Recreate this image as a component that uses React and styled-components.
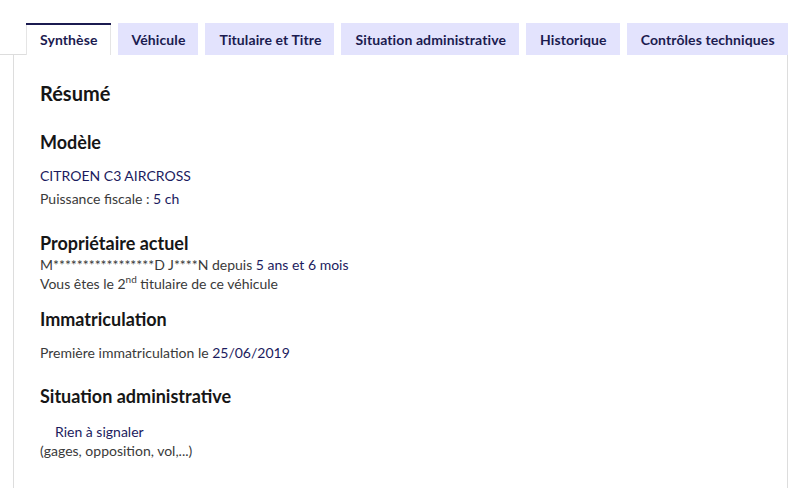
import React, { useState } from 'react'
import styled, { createGlobalStyle } from 'styled-components'

const GlobalStyle = createGlobalStyle`
	html, body {
		margin: 0;
		padding: 0;
		background: #fff;
	}
	body {
		font-family: Lato, 'Noto Sans', sans-serif;
		color: #161616;
	}
`

const tabs = [
	'Synthèse',
	'Véhicule',
	'Titulaire et Titre',
	'Situation administrative',
	'Historique',
	'Contrôles techniques',
]

function App() {
	const [active, setActive] = useState(0)

	return (
		<>
			<GlobalStyle />
			<Wrapper>
				<TabList>
					{tabs.map((label, index) => (
						<Tab key={label} $active={index === active} onClick={() => setActive(index)}>
							{label}
						</Tab>
					))}
				</TabList>
				<Panel>
					<Title>Résumé</Title>

					<Section $top={23}>
						<Heading>Modèle</Heading>
						<Line $gap={12}>
							<Value>CITROEN C3 AIRCROSS</Value>
						</Line>
						<Line $gap={4}>
							Puissance fiscale : <Value>5 ch</Value>
						</Line>
					</Section>

					<Section $top={23}>
						<Heading>Propriétaire actuel</Heading>
						<Line>
							M*****************D J****N depuis <Value>5 ans et 6 mois</Value>
						</Line>
						<Line>
							Vous êtes le 2<sup>nd</sup> titulaire de ce véhicule
						</Line>
					</Section>

					<Section $top={14}>
						<Heading>Immatriculation</Heading>
						<Line $gap={12}>
							Première immatriculation le <Value>25/06/2019</Value>
						</Line>
					</Section>

					<Section $top={22}>
						<Heading>Situation administrative</Heading>
						<Line $gap={14} $indent={15}>
							<Value>Rien à signaler</Value>
						</Line>
						<Line>(gages, opposition, vol,...)</Line>
					</Section>
				</Panel>
			</Wrapper>
		</>
	)
}

const Wrapper = styled.div`
	width: 800px;
	height: 488px;
	overflow: hidden;
	padding-top: 23px;
	box-sizing: border-box;
`

const TabList = styled.div`
	position: relative;
	display: flex;
	gap: 7px;
	padding-left: 26px;
	height: 32px;

	&::before {
		content: '';
		position: absolute;
		left: 0;
		bottom: 0;
		width: 26px;
		height: 1px;
		background: #dddddd;
	}
`

const Tab = styled.button`
	flex: none;
	height: 32px;
	padding: 0 13px 0 14px;
	border: none;
	margin: 0;
	font-family: Lato, 'Noto Sans', sans-serif;
	font-size: 14px;
	font-weight: 700;
	letter-spacing: 0.1px;
	color: #1b1b50;
	cursor: pointer;
	white-space: nowrap;
	background: ${(p) => (p.$active ? '#ffffff' : '#e3e3fd')};
	box-shadow: ${(p) =>
		p.$active
			? 'inset 0 2px 0 #1b1b50, inset 1px 0 0 #e5e5e5, inset -1px 0 0 #e5e5e5'
			: 'none'};
`

const Panel = styled.div`
	margin-left: 13px;
	width: 775px;
	height: 433px;
	box-sizing: border-box;
	border-left: 1px solid #dddddd;
	border-right: 1px solid #dddddd;
	padding: 24px 0 0 26px;
`

const Title = styled.h2`
	margin: 0;
	font-size: 20px;
	line-height: 28px;
	font-weight: 700;
`

const Section = styled.div`
	margin-top: ${(p) => p.$top}px;
`

const Heading = styled.h3`
	margin: 0;
	font-size: 18px;
	line-height: 24px;
	font-weight: 700;
`

const Line = styled.p`
	margin: ${(p) => p.$gap ?? 0}px 0 0 ${(p) => p.$indent ?? 0}px;
	font-size: 14px;
	line-height: 19px;
	color: #3a3a3a;

	sup {
		font-size: 10px;
		line-height: 0;
	}
`

const Value = styled.span`
	color: #1b1b5e;
`

export default App
